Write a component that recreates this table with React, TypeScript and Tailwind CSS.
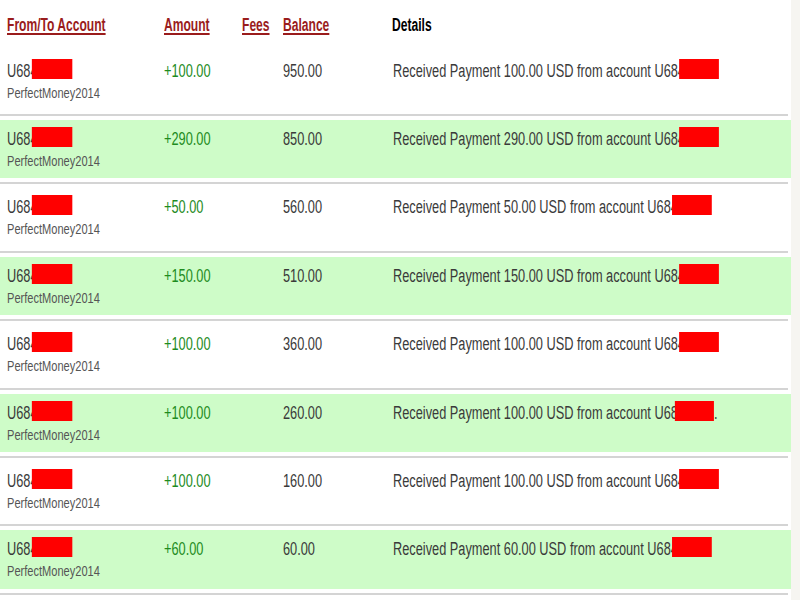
import React from 'react'

type Row = {
  amount: string
  balance: string
  sum: string
  green: boolean
  tail?: 'dot'
}

const rows: Row[] = [
  { amount: '+100.00', balance: '950.00', sum: '100.00', green: false },
  { amount: '+290.00', balance: '850.00', sum: '290.00', green: true },
  { amount: '+50.00', balance: '560.00', sum: '50.00', green: false },
  { amount: '+150.00', balance: '510.00', sum: '150.00', green: true },
  { amount: '+100.00', balance: '360.00', sum: '100.00', green: false },
  { amount: '+100.00', balance: '260.00', sum: '100.00', green: true, tail: 'dot' },
  { amount: '+100.00', balance: '160.00', sum: '100.00', green: false },
  { amount: '+60.00', balance: '60.00', sum: '60.00', green: true },
]

// the screenshot is squeezed sideways, so text is drawn narrow
function Narrow({ children, className = '' }: { children: React.ReactNode; className?: string }) {
  return (
    <span className={`inline-block origin-left scale-x-[0.71] whitespace-nowrap ${className}`}>
      {children}
    </span>
  )
}

function Redacted({ className = '' }: { className?: string }) {
  return <span className={`inline-block align-baseline h-[20px] mt-[-3px] mb-[-2px] bg-[#ff0000] ${className}`} />
}

function HeaderCell({ label, width, plain }: { label: string; width: string; plain?: boolean }) {
  return (
    <div className={`${width} shrink-0`}>
      <span
        className={`inline-block origin-left scale-x-[0.69] whitespace-nowrap font-bold ${
          plain ? 'text-black' : 'text-[#9a1c1c] underline decoration-2 underline-offset-[2px]'
        }`}
      >
        {label}
      </span>
    </div>
  )
}

export default function App() {
  return (
    <div className="flex w-[800px] h-[600px] overflow-hidden bg-white font-['Liberation_Sans',Arial,sans-serif]">
      <div className="w-[791px] shrink-0">
        {/* Header */}
        <div className="h-[51.6px] pt-[17.4px] flex text-[17.5px] leading-[17.5px]">
          <div className="w-[164px] pl-[7px] shrink-0">
            <HeaderCell label="From/To Account" width="w-[157px]" />
          </div>
          <HeaderCell label="Amount" width="w-[78px]" />
          <HeaderCell label="Fees" width="w-[41px]" />
          <HeaderCell label="Balance" width="w-[109px]" />
          <HeaderCell label="Details" width="flex-1" plain />
        </div>

        {rows.map((r, i) => (
          <div key={i}>
            <div
              className={`h-[58.4px] flex pt-[10px] text-[18px] leading-[18px] text-[#3a3a3a] ${
                r.green ? 'bg-[#cefcc8]' : 'bg-white'
              }`}
            >
              <div className="w-[164px] pl-[7px] shrink-0 flex flex-col">
                <Narrow>
                  U684
                  <Redacted className="ml-[-8px] w-[57px]" />
                </Narrow>
                <span className="inline-block origin-left scale-x-[0.79] whitespace-nowrap text-[14px] leading-[14px] mt-[6px] text-[#555]">
                  PerfectMoney2014
                </span>
              </div>
              <div className="w-[78px] shrink-0">
                <Narrow className="text-[#1e8c1e]">{r.amount}</Narrow>
              </div>
              <div className="w-[41px] shrink-0" />
              <div className="w-[110px] shrink-0">
                <Narrow>{r.balance}</Narrow>
              </div>
              <div className="flex-1 min-w-0">
                <Narrow>
                  {`Received Payment ${r.sum} USD from account `}
                  {r.tail === 'dot' ? (
                    <>
                      U68
                      <Redacted className="ml-[-4px] w-[55px]" />.
                    </>
                  ) : (
                    <>
                      U684
                      <Redacted className="ml-[-8px] w-[56px]" />
                    </>
                  )}
                </Narrow>
              </div>
            </div>
            <div className="py-[4px]">
              <div className="h-[2px] w-[788px] bg-[#d4d4d4]" />
            </div>
          </div>
        ))}
      </div>
      <div className="flex-1 bg-[#f6f5f1]" />
    </div>
  )
}
